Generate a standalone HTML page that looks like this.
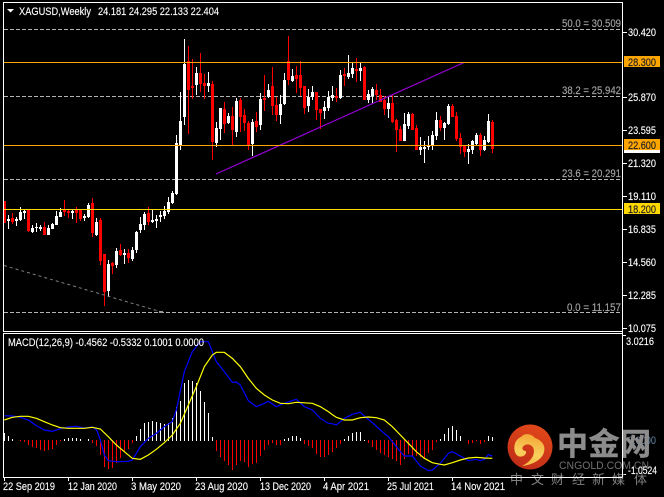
<!DOCTYPE html>
<html><head><meta charset="utf-8"><style>
html,body{margin:0;padding:0;background:#000;width:664px;height:497px;overflow:hidden}
svg{display:block}
text{font-family:"Liberation Sans","Noto Sans CJK SC",sans-serif;font-size:11px}
.t text{stroke:#fff;stroke-width:.2;stroke-opacity:.7}
.f text{stroke:#aaa;stroke-width:.15}
.d text{stroke:#222;stroke-width:.2}
</style></head><body>
<svg width="664" height="497" viewBox="0 0 664 497" xmlns="http://www.w3.org/2000/svg">
<rect width="664" height="497" fill="#000"/>
<g shape-rendering="crispEdges">
<!-- fib levels -->
<g stroke="#b4b4b4" stroke-dasharray="4 2" fill="none">
<path d="M4 29.5H622M4 96.5H622M4 179.5H622M4 312.5H622"/>
</g>
<!-- candles wicks white -->
<path fill="none" stroke="#fff" stroke-width="1" d="M8.5 215V229M16.5 217V226M20.5 207V221M24.5 209V219M32.5 225V233M36.5 223V232M40.5 225V231M48.5 225V235M52.5 223V229M56.5 211V225M60.5 208V217M72.5 209V219M84.5 214V221M88.5 203V218M96.5 218V236M108.5 260V297M116.5 248V268M124.5 249V264M132.5 247V261M136.5 231V253M140.5 217V233M144.5 212V230M152.5 210V223M156.5 215V228M160.5 211V222M164.5 206V219M168.5 197V214M172.5 191V204M176.5 135V195M180.5 92V150M184.5 39V125M196.5 67V95M208.5 72V92M216.5 122V147M220.5 108V140M228.5 113V124M236.5 98V137M252.5 119V156M260.5 93V130M268.5 84V98M280.5 95V124M284.5 73V105M292.5 69V82M308.5 89V112M312.5 86V100M324.5 101V119M328.5 91V111M332.5 86V101M340.5 70V99M348.5 55V79M352.5 62V78M360.5 63V81M368.5 90V103M372.5 87V103M388.5 97V118M404.5 113V141M408.5 112V129M420.5 137V155M424.5 141V163M428.5 136V150M432.5 131V150M436.5 112V140M444.5 122V140M448.5 104V125M468.5 144V164M472.5 140V154M476.5 133V145M484.5 136V151M488.5 114V143"/>
<!-- candles bodies white -->
<path fill="none" stroke="#fff" stroke-width="3" d="M8.5 219V221M16.5 219V221M20.5 212V220M24.5 211V213M32.5 228V232M36.5 227V228M40.5 227V229M48.5 228V235M52.5 224V229M56.5 216V225M60.5 212V217M72.5 211V213M84.5 216V218M88.5 205V217M96.5 222V235M108.5 264V291M116.5 251V265M124.5 253V255M132.5 250V259M136.5 232V250M140.5 224V230M144.5 214V225M152.5 220V222M156.5 219V221M160.5 215V217M164.5 211V216M168.5 202V212M172.5 193V203M176.5 143V194M180.5 121V145M184.5 64V117M196.5 73V85M208.5 83V86M216.5 128V143M220.5 108V129M228.5 116V123M236.5 101V132M252.5 122V144M260.5 99V125M268.5 90V97M280.5 104V115M284.5 80V104M292.5 76V81M308.5 97V106M312.5 92V97M324.5 107V111M328.5 97V108M332.5 95V98M340.5 75V98M348.5 73V77M352.5 68V74M360.5 68V71M368.5 94V100M372.5 89V96M388.5 103V109M404.5 124V141M408.5 114V126M420.5 147V150M424.5 147V149M428.5 146V147M432.5 135V146M436.5 120V136M444.5 123V128M448.5 106V124M468.5 149V152M472.5 141V150M476.5 135V144M484.5 140V150M488.5 121V142"/>
<!-- candles wicks red -->
<path fill="none" stroke="#f00" stroke-width="1" d="M4.5 201V223M12.5 213V224M28.5 209V232M44.5 222V235M64.5 200V216M68.5 209V218M76.5 207V223M80.5 209V221M92.5 198V237M100.5 218V265M104.5 254V306M112.5 262V274M120.5 244V256M128.5 249V263M148.5 207V225M188.5 46V134M192.5 59V99M200.5 53V92M204.5 74V99M212.5 81V160M224.5 102V133M232.5 107V145M240.5 98V132M244.5 109V131M248.5 121V150M256.5 112V132M264.5 75V111M272.5 67V115M276.5 97V121M288.5 36V85M296.5 66V93M300.5 61V96M304.5 86V114M316.5 92V120M320.5 109V129M336.5 88V102M344.5 68V86M356.5 58V82M364.5 66V100M376.5 84V100M380.5 89V102M384.5 96V115M392.5 95V123M396.5 119V152M400.5 126V141M412.5 113V130M416.5 125V150M440.5 116V131M452.5 104V117M456.5 112V141M460.5 133V154M464.5 146V157M480.5 133V156M492.5 120V153"/>
<!-- candles bodies red -->
<path fill="none" stroke="#f00" stroke-width="3" d="M4.5 201V223M12.5 218V222M28.5 210V231M44.5 227V235M64.5 210V212M68.5 211V213M76.5 210V213M80.5 210V219M92.5 203V233M100.5 220V261M104.5 254V292M112.5 263V266M120.5 250V255M128.5 253V258M148.5 213V222M188.5 61V90M192.5 86V88M200.5 73V84M204.5 83V86M212.5 84V142M224.5 109V124M232.5 116V130M240.5 100V117M244.5 115V123M248.5 123V145M256.5 121V127M264.5 98V100M272.5 86V106M276.5 105V115M288.5 61V80M296.5 75V79M300.5 75V88M304.5 86V108M316.5 92V110M320.5 109V113M336.5 96V98M344.5 74V76M356.5 69V71M364.5 67V100M376.5 90V95M380.5 95V102M384.5 100V109M392.5 103V122M396.5 120V130M400.5 129V141M412.5 114V130M416.5 128V150M440.5 120V128M452.5 106V117M456.5 116V139M460.5 138V147M464.5 146V152M480.5 135V150M492.5 122V149"/>
</g>
<!-- grey descending line -->
<path d="M4 265.5L160 311.5" fill="none" stroke="#808080" stroke-dasharray="3 3"/>
<rect x="159" y="311" width="4" height="2" fill="#999"/>
<!-- purple trend -->
<path d="M216 174L464 62.5" fill="none" stroke="#9400d3" stroke-width="1.2"/>
<g shape-rendering="crispEdges">
<path d="M4 62.5H622M4 145.5H622" stroke="#ffa500" fill="none"/>
<path d="M4 209.5H622" stroke="#ffd700" fill="none"/>
<!-- frame -->
<path d="M3.5 2V331M3 2.5H622.5M622.5 2V477M3 331.5H622M3 333.5H622M3.5 333V477M3 477.5H622" stroke="#fff" fill="none"/>
<!-- price ticks -->
<path d="M623 32.5h4M623 97.5h4M623 130.5h4M623 163.5h4M623 196.5h4M623 229.5h4M623 262.5h4M623 295.5h4M623 328.5h4M623 335.5h3M623 440.5h3M623 474.5h3" stroke="#fff" fill="none"/>
<!-- time ticks -->
<path d="M4.5 477V481M68.5 477V481M132.5 477V481M196.5 477V481M260.5 477V481M324.5 477V481M388.5 477V481M452.5 477V481" stroke="#fff" fill="none"/>
<!-- histogram -->
<path fill="none" stroke="#fff" d="M4.5 433V441M8.5 436V441M12.5 439V441M64.5 439V441M68.5 438V441M72.5 438V441M76.5 438V441M80.5 439V441M88.5 439V441M136.5 436V441M140.5 429V441M144.5 423V441M148.5 422V441M152.5 421V441M156.5 422V441M160.5 423V441M164.5 424V441M168.5 423V441M172.5 418V441M176.5 407V441M180.5 401V441M184.5 383V441M188.5 380V441M192.5 381V441M196.5 383V441M200.5 391V441M204.5 402V441M208.5 413V441M212.5 437V441M284.5 439V441M288.5 438V441M292.5 436V441M296.5 436V441M300.5 438V441M344.5 439V441M348.5 436V441M352.5 433V441M356.5 432V441M360.5 432V441M364.5 440V441M440.5 439V441M444.5 434V441M448.5 428V441M452.5 426V441M456.5 430V441M460.5 436V441M488.5 436V441M492.5 437V441"/>
<path fill="none" stroke="#f00" d="M20.5 440V441M24.5 440V442M28.5 440V445M32.5 440V447M36.5 440V448M40.5 440V450M44.5 440V451M48.5 440V450M52.5 440V449M56.5 440V445M60.5 440V441M92.5 440V443M96.5 440V446M100.5 440V455M104.5 440V467M108.5 440V469M112.5 440V468M116.5 440V463M120.5 440V458M124.5 440V452M128.5 440V449M132.5 440V443M216.5 440V451M220.5 440V457M224.5 440V461M228.5 440V465M232.5 440V470M236.5 440V465M240.5 440V461M244.5 440V462M248.5 440V467M252.5 440V464M256.5 440V463M260.5 440V456M264.5 440V450M268.5 440V445M272.5 440V443M276.5 440V445M280.5 440V445M304.5 440V444M308.5 440V446M312.5 440V448M316.5 440V454M320.5 440V457M324.5 440V457M328.5 440V455M332.5 440V452M336.5 440V448M340.5 440V444M368.5 440V443M372.5 440V447M376.5 440V450M380.5 440V453M384.5 440V455M388.5 440V457M392.5 440V459M396.5 440V461M400.5 440V465M404.5 440V459M408.5 440V454M412.5 440V456M416.5 440V456M420.5 440V457M424.5 440V458M428.5 440V453M432.5 440V450M436.5 440V442M468.5 440V444M472.5 440V443M476.5 440V441M480.5 440V444M484.5 440V442"/>
</g>
<!-- MACD lines -->
<g fill="none" stroke-width="3.6" transform="translate(0,330) scale(.33333)">
<polyline stroke="#00f" points="13,257 37,258 61,262 85,270 109,287 133,300 157,304 181,296 205,291 229,289 253,294 277,291 290,300 301,330 313,375 325,392 349,395 385,394 397,390 421,350 445,325 469,310 493,290 517,275 529,240 553,125 577,65 601,35 625,35 637,65 649,95 673,125 697,157 709,156 721,165 745,212 769,230 793,220 805,214 829,230 853,220 889,208 913,230 937,240 961,265 985,280 996,281"/>
<polyline stroke="#ff0" points="13,270 37,262 61,259 85,259 109,265 133,275 157,285 181,293 205,295 253,295 277,292 301,297 325,320 349,345 373,365 397,385 421,388 445,375 469,358 493,338 517,315 541,280 565,225 589,170 613,110 637,75 649,67 673,67 697,85 721,110 745,145 769,175 793,195 817,210 841,220 865,221 889,217 937,220 961,230 985,245 996,253"/>
</g>
<g fill="none" stroke-width="3.6" transform="translate(332,330) scale(.33333)">
<polyline stroke="#00f" points="0,281 13,285 37,265 61,253 85,247 97,258 121,278 145,300 169,320 181,335 205,365 217,378 241,378 265,408 289,422 301,420 325,400 349,370 361,365 385,378 409,392 433,388 445,392 457,388 469,374 481,378"/>
<polyline stroke="#ff0" points="0,253 13,262 37,270 61,270 85,263 109,261 133,263 157,270 181,290 205,315 229,340 253,365 277,385 301,398 325,403 337,405 361,398 385,390 409,384 433,382 457,384 481,385"/>
</g>
<!-- header -->
<path d="M7 9h7l-3.5 3.5z" fill="#fff"/>
<g class="t">
<text x="19" y="15" fill="#fff" textLength="72" lengthAdjust="spacingAndGlyphs">XAGUSD,Weekly</text>
<text x="98" y="15" fill="#fff" textLength="121" lengthAdjust="spacingAndGlyphs">24.181 24.295 22.133 22.404</text>
<text x="8" y="346" fill="#fff" textLength="196" lengthAdjust="spacingAndGlyphs">MACD(12,26,9) -0.4562 -0.5332 0.1001 0.0000</text>
</g>
<!-- fib labels -->
<g fill="#a0a0a0" class="f">
<text x="562" y="27" textLength="59" lengthAdjust="spacingAndGlyphs">50.0 = 30.509</text>
<text x="562" y="94" textLength="59" lengthAdjust="spacingAndGlyphs">38.2 = 25.942</text>
<text x="562" y="177" textLength="59" lengthAdjust="spacingAndGlyphs">23.6 = 20.291</text>
<text x="567" y="311" textLength="54" lengthAdjust="spacingAndGlyphs">0.0 = 11.157</text>
</g>
<!-- price axis -->
<g fill="#fff" class="t">
<text x="628" y="36" textLength="28" lengthAdjust="spacingAndGlyphs">30.420</text>
<text x="628" y="101" textLength="28" lengthAdjust="spacingAndGlyphs">25.870</text>
<text x="628" y="134" textLength="28" lengthAdjust="spacingAndGlyphs">23.595</text>
<text x="628" y="167" textLength="28" lengthAdjust="spacingAndGlyphs">21.320</text>
<text x="628" y="200" textLength="28" lengthAdjust="spacingAndGlyphs">19.110</text>
<text x="628" y="233" textLength="28" lengthAdjust="spacingAndGlyphs">16.835</text>
<text x="628" y="266" textLength="28" lengthAdjust="spacingAndGlyphs">14.560</text>
<text x="628" y="299" textLength="28" lengthAdjust="spacingAndGlyphs">12.285</text>
<text x="628" y="332" textLength="28" lengthAdjust="spacingAndGlyphs">10.075</text>
<text x="626" y="345" textLength="28" lengthAdjust="spacingAndGlyphs">3.0216</text>
</g>
<text x="628" y="444" fill="#6688aa" textLength="28" lengthAdjust="spacingAndGlyphs">0.0000</text>
<g class="d">
<rect x="624" y="56" width="36" height="11" fill="#ffa500" shape-rendering="crispEdges"/>
<text x="628" y="66" fill="#222" textLength="28" lengthAdjust="spacingAndGlyphs">28.300</text>
<rect x="624" y="150" width="36" height="3" fill="#fff" shape-rendering="crispEdges"/>
<rect x="624" y="139" width="36" height="11" fill="#ffa500" shape-rendering="crispEdges"/>
<text x="628" y="149" fill="#222" textLength="28" lengthAdjust="spacingAndGlyphs">22.600</text>
<rect x="624" y="203" width="36" height="11" fill="#ffd700" shape-rendering="crispEdges"/>
<text x="628" y="213" fill="#222" textLength="28" lengthAdjust="spacingAndGlyphs">18.200</text>
</g>
<!-- time axis -->
<g fill="#fff" class="t">
<text x="3" y="490" textLength="52" lengthAdjust="spacingAndGlyphs">22 Sep 2019</text>
<text x="68" y="490" textLength="49" lengthAdjust="spacingAndGlyphs">12 Jan 2020</text>
<text x="131" y="490" textLength="50" lengthAdjust="spacingAndGlyphs">3 May 2020</text>
<text x="195" y="490" textLength="53" lengthAdjust="spacingAndGlyphs">23 Aug 2020</text>
<text x="260" y="490" textLength="51" lengthAdjust="spacingAndGlyphs">13 Dec 2020</text>
<text x="323" y="490" textLength="46" lengthAdjust="spacingAndGlyphs">4 Apr 2021</text>
<text x="387" y="490" textLength="47" lengthAdjust="spacingAndGlyphs">25 Jul 2021</text>
<text x="451" y="490" textLength="54" lengthAdjust="spacingAndGlyphs">14 Nov 2021</text>
</g>
<!-- logo -->
<defs>
<linearGradient id="lg" x1="0.7" y1="0" x2="0.3" y2="1"><stop offset="0" stop-color="#e2481a"/><stop offset="1" stop-color="#bf2c17"/></linearGradient>
<linearGradient id="ly" x1="0.6" y1="0" x2="0.4" y2="1"><stop offset="0" stop-color="#f3a534"/><stop offset="0.6" stop-color="#f8cf5c"/><stop offset="1" stop-color="#f6b840"/></linearGradient>
</defs>
<circle cx="530" cy="447" r="22.5" fill="url(#lg)"/>
<path d="M515 452C513 445 516 439 521 437C524 433 531 433 535 438C541 440 546 445 544 452C542 460 532 465 522 466C528 463 534 458 534 451C534 446 529 443 525 445C521 447 522 451 526 451L526 453C525 457 517 459 515 452Z" fill="url(#ly)"/>
<text x="557" y="455" fill="#8c8c8c" stroke="#8c8c8c" stroke-width=".5" style="font-family:'Noto Sans CJK SC',sans-serif;font-size:31px;font-weight:700" textLength="94">中金网</text>
<text x="559" y="469" fill="#707070" style="font-size:11px" textLength="90" lengthAdjust="spacingAndGlyphs">CNGOLD.COM.CN</text>
<g fill="#808080">
<text x="510" y="484" style="font-size:13px">中</text>
<text x="531" y="484" style="font-size:13px">文</text>
<text x="551" y="484" style="font-size:13px">财</text>
<text x="572" y="484" style="font-size:13px">经</text>
<text x="592" y="484" style="font-size:13px">新</text>
<text x="612" y="484" style="font-size:13px">媒</text>
<text x="634" y="484" style="font-size:13px">体</text>
</g>
<path d="M622.5 425V477M505 477.5H622.5" stroke="#fff" shape-rendering="crispEdges"/>
<g class="t"><text x="628" y="474" fill="#fff" textLength="29" lengthAdjust="spacingAndGlyphs">-1.0524</text></g>
</svg>
</body></html>
